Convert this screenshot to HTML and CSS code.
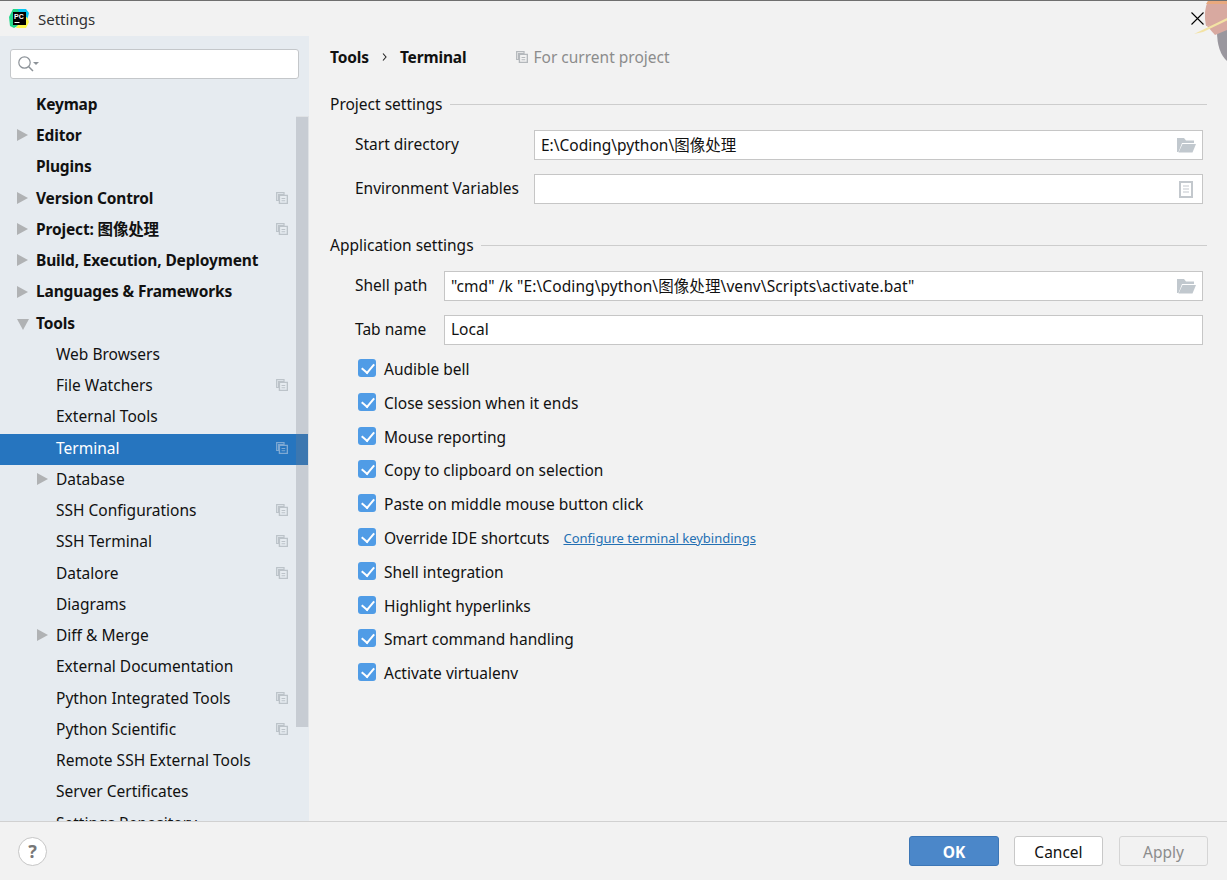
FILE: index.html
```html
<!DOCTYPE html>
<html lang="en">
<head>
<meta charset="utf-8">
<title>Settings</title>
<link rel="stylesheet" href="styles.css">
</head>
<body>
<svg class="defs" width="0" height="0">
  <defs>
    <g id="copy">
      <path d="M.7.7h8v2h-6v6.500h-2z" fill="none" stroke="currentColor" stroke-width="1.300"/>
      <path d="M3.700 3.700h8.600v8.600H3.700z" fill="none" stroke="currentColor" stroke-width="1.500"/>
      <path d="M6 7h4M6 9.500h4" stroke="currentColor" stroke-width="1.200"/>
    </g>
    <g id="folder">
      <path d="M0 1h7l2 2.500h8V6H5L1.500 15H0z" fill="currentColor"/>
      <path d="M5.500 7H19l-3.500 8.500H1.500z" fill="currentColor"/>
    </g>
  </defs>
</svg>
<div class="window">
  <header class="titlebar">
    <svg class="logo" width="21" height="21" viewBox="0 0 21 21">
      <path d="M4 1h8l2 3-2 12-7 4-4-2-1-9z" fill="#21d789"/>
      <path d="M9 1h8l3 4-2 8-6-2z" fill="#07c3f2"/>
      <path d="M18 9l2 5-3 6-10 0 5-8z" fill="#fcf84a"/>
      <rect x="4" y="4" width="13" height="13" fill="#000"/>
      <text x="5" y="11" class="logo-text">PC</text>
      <rect x="5.500" y="14" width="5" height="1" fill="#fff"/>
    </svg>
    <span class="title">Settings</span>
    <svg class="close" width="13" height="13" viewBox="0 0 13 13"><path d="M.5.5l12 12M12.500.5l-12 12" stroke="#000" stroke-width="1.100" fill="none"/></svg>
  </header>
  <svg class="planet" width="37" height="62" viewBox="0 0 37 62">
    <path d="M27 30q0 21 10 30V24z" fill="#9a979e"/>
    <path d="M18 0q-5 10-2 25l21 -2V0z" fill="#d8a9a0"/>
    <path d="M17 25l20-6v10l-12 5z" fill="#d8a9a0"/>
    <path d="M18 0h19v3H16z" fill="#e9a97e"/>
    <path d="M4 33l33-16v2.500L13 31z" fill="#f3e3a4"/>
  </svg>
  <main class="main">
    <nav class="sidebar">
      <div class="search">
        <svg width="22" height="18" viewBox="0 0 22 18"><circle cx="6.500" cy="7.500" r="5.700" fill="none" stroke="#8c9298" stroke-width="1.200"/><path d="M10.500 11.500l4.500 4.500" stroke="#8c9298" stroke-width="1.500"/><path d="M15 7h6l-3 3z" fill="#8c9298"/></svg>
      </div>
      <ul class="tree">
        <li class="row bold"><span class="label">Keymap</span></li>
        <li class="row bold"><i class="arrow"></i><span class="label">Editor</span></li>
        <li class="row bold"><span class="label">Plugins</span></li>
        <li class="row bold"><i class="arrow"></i><span class="label">Version Control</span><svg class="copy" viewBox="0 0 13 13"><use href="#copy"/></svg></li>
        <li class="row bold"><i class="arrow"></i><span class="label">Project: 图像处理</span><svg class="copy" viewBox="0 0 13 13"><use href="#copy"/></svg></li>
        <li class="row bold"><i class="arrow"></i><span class="label">Build, Execution, Deployment</span></li>
        <li class="row bold"><i class="arrow"></i><span class="label">Languages &amp; Frameworks</span></li>
        <li class="row bold"><i class="arrow open"></i><span class="label">Tools</span></li>
        <li class="row sub"><span class="label">Web Browsers</span></li>
        <li class="row sub"><span class="label">File Watchers</span><svg class="copy" viewBox="0 0 13 13"><use href="#copy"/></svg></li>
        <li class="row sub"><span class="label">External Tools</span></li>
        <li class="row sub selected"><span class="label">Terminal</span><svg class="copy" viewBox="0 0 13 13"><use href="#copy"/></svg></li>
        <li class="row sub"><i class="arrow"></i><span class="label">Database</span></li>
        <li class="row sub"><span class="label">SSH Configurations</span><svg class="copy" viewBox="0 0 13 13"><use href="#copy"/></svg></li>
        <li class="row sub"><span class="label">SSH Terminal</span><svg class="copy" viewBox="0 0 13 13"><use href="#copy"/></svg></li>
        <li class="row sub"><span class="label">Datalore</span><svg class="copy" viewBox="0 0 13 13"><use href="#copy"/></svg></li>
        <li class="row sub"><span class="label">Diagrams</span></li>
        <li class="row sub"><i class="arrow"></i><span class="label">Diff &amp; Merge</span></li>
        <li class="row sub"><span class="label">External Documentation</span></li>
        <li class="row sub"><span class="label">Python Integrated Tools</span><svg class="copy" viewBox="0 0 13 13"><use href="#copy"/></svg></li>
        <li class="row sub"><span class="label">Python Scientific</span><svg class="copy" viewBox="0 0 13 13"><use href="#copy"/></svg></li>
        <li class="row sub"><span class="label">Remote SSH External Tools</span></li>
        <li class="row sub"><span class="label">Server Certificates</span></li>
        <li class="row sub"><span class="label">Settings Repository</span></li>
      </ul>
      <div class="scrollbar"></div>
    </nav>
    <section class="content">
      <div class="crumbs">
        <b>Tools</b>
        <svg class="chev" width="5" height="8" viewBox="0 0 5 8"><path d="M1 .5l3 3.500-3 3.500" fill="none" stroke="#222" stroke-width="1.100"/></svg>
        <b>Terminal</b>
        <span class="scope"><svg class="copy" viewBox="0 0 13 13"><use href="#copy"/></svg>For current project</span>
      </div>
      <div class="group first"><span>Project settings</span><hr></div>
      <div class="fields wide">
        <label>Start directory</label>
        <div class="input"><span>E:\Coding\python\图像处理</span><svg class="ficon" width="19" height="17" viewBox="0 0 19 17"><use href="#folder"/></svg></div>
        <label>Environment Variables</label>
        <div class="input"><svg class="ficon doc" width="14" height="17" viewBox="0 0 14 17"><path d="M0 0h14v17H0z" fill="#c3c8cd"/><path d="M2 2h10v13H2z" fill="#fff"/><path d="M4 5h6M4 8h6M4 11h6" stroke="#c3c8cd" stroke-width="1.200"/></svg></div>
      </div>
      <div class="group second"><span>Application settings</span><hr></div>
      <div class="fields narrow">
        <label>Shell path</label>
        <div class="input"><span class="long">"cmd" /k "E:\Coding\python\图像处理\venv\Scripts\activate.bat"</span><svg class="ficon" width="19" height="17" viewBox="0 0 19 17"><use href="#folder"/></svg></div>
        <label>Tab name</label>
        <div class="input"><span>Local</span></div>
      </div>
      <ul class="checks">
        <li><i class="check"></i>Audible bell</li>
        <li><i class="check"></i>Close session when it ends</li>
        <li><i class="check"></i>Mouse reporting</li>
        <li><i class="check"></i>Copy to clipboard on selection</li>
        <li><i class="check"></i>Paste on middle mouse button click</li>
        <li><i class="check"></i>Override IDE shortcuts<a class="link">Configure terminal keybindings</a></li>
        <li><i class="check"></i>Shell integration</li>
        <li><i class="check"></i>Highlight hyperlinks</li>
        <li><i class="check"></i>Smart command handling</li>
        <li><i class="check"></i>Activate virtualenv</li>
      </ul>
    </section>
  </main>
  <footer class="footer">
    <div class="help">?</div>
    <div class="buttons">
      <div class="btn ok">OK</div>
      <div class="btn">Cancel</div>
      <div class="btn disabled">Apply</div>
    </div>
  </footer>
</div>
</body>
</html>
```

FILE: styles.css
```css
* { box-sizing: border-box; }
html, body { margin: 0; padding: 0; }
body {
  font-family: "Noto Sans", "Noto Sans CJK SC", sans-serif;
  font-size: 15.5px;
  color: #111;
  background: #f2f2f2;
}
ul { list-style: none; margin: 0; padding: 0; }
.defs { position: absolute; }
.window {
  position: relative;
  width: 1227px;
  height: 880px;
  display: flex;
  flex-direction: column;
  border-top: 1px solid #6f6f6f;
  overflow: hidden;
}
.titlebar {
  height: 35px;
  flex: none;
  display: flex;
  align-items: center;
  padding: 0 23px 0 9px;
}
.logo { flex: none; margin-right: 8px; }
.logo-text { font: bold 7px "Liberation Sans", sans-serif; fill: #fff; }
.title { flex: 1; color: #333; font-size: 15px; }
.planet { position: absolute; right: 0; top: 0; }
.close { position: relative; z-index: 1; }
.main { flex: 1; display: flex; min-height: 0; }
.sidebar {
  position: relative;
  width: 309px;
  flex: none;
  background: #e6ebf0;
  overflow: hidden;
  padding-top: 13px;
}
.search {
  width: 289px;
  height: 30px;
  margin-left: 10px;
  background: #fff;
  border: 1px solid #c4c7ca;
  border-radius: 3px;
  display: flex;
  align-items: center;
  padding-left: 7px;
}
.tree { margin-top: 11px; }
.row {
  position: relative;
  height: 31.25px;
  display: flex;
  align-items: center;
  padding: 0 21.500px 3.300px 36px;
}
.row.bold { font-weight: 700; letter-spacing: -0.15px; }
.row.sub { padding-left: 56px; }
.label { flex: 1; white-space: nowrap; }
.copy { flex: none; width: 12px; height: 12px; color: #bcc3c9; }
.row .copy { margin-top: 0; }
.arrow {
  position: absolute;
  left: 17px;
  top: 8px;
  width: 0;
  height: 0;
  border-left: 11px solid #b0b2b4;
  border-top: 6px solid transparent;
  border-bottom: 6px solid transparent;
}
.arrow.open {
  left: 17px;
  top: 10px;
  border-top: 11px solid #b0b2b4;
  border-left: 6px solid transparent;
  border-right: 6px solid transparent;
  border-bottom: 0;
}
.row.sub .arrow { left: 37px; }
.selected { background: #2675bf; color: #fff; }
.selected .copy { color: #7ea9d3; }
.scrollbar {
  position: absolute;
  right: 0;
  top: 80px;
  width: 13px;
  height: 611px;
  background: rgba(120, 125, 135, 0.28);
  border: 1px solid #dfe2e5;
  border-width: 1px 1px 0 0;
}
.content { flex: 1; padding: 0 20px 0 21px; min-width: 0; }
.crumbs {
  height: 41px;
  display: flex;
  align-items: center;
  padding-top: 1px;
}
.crumbs b { font-weight: 700; letter-spacing: -0.15px; }
.chev { margin: 0 13px 0 13px; }
.scope {
  margin-left: 50px;
  display: flex;
  align-items: center;
  gap: 5px;
  color: #8c8c8c;
}
.scope .copy { color: #b4b8bc; }
.group { display: flex; align-items: center; gap: 7px; }
.group hr { flex: 1; border: 0; border-top: 1px solid #cdcdcd; margin: 0; }
.group.first { margin-top: 13px; height: 28px; }
.group.second { margin-top: 27px; height: 28px; }
.fields { display: grid; row-gap: 14px; padding-left: 25px; padding-right: 4px; grid-auto-rows: 30px; align-items: center; margin-top: 12px; }
.fields label { margin-top: -2px; }
.fields.wide { grid-template-columns: 179px 1fr; }
.fields.narrow { grid-template-columns: 89px 1fr; }
.input {
  height: 30px;
  background: #fff;
  border: 1px solid #c6c6c6;
  padding: 0 6px 2px 6px;
  display: flex;
  align-items: center;
  white-space: nowrap;
}
.input span { flex: 1; }
.input .long { letter-spacing: 0.09px; }
.ficon { color: #c1c8ce; flex: none; margin-left: auto; margin-top: 2px; }
.ficon.doc { margin-right: 3px; }
.checks { margin-top: 7.3px; padding-left: 28px; }
.checks li { height: 33.78px; display: flex; align-items: center; }
.check {
  position: relative;
  width: 18px;
  height: 18px;
  margin: -2px 8px 0 0;
  flex: none;
  border-radius: 3px;
  background: #509ce6;
}
.check::after {
  content: "";
  position: absolute;
  left: 6px;
  top: 2px;
  width: 6px;
  height: 10px;
  border: solid #fff;
  border-width: 0 2.5px 2.5px 0;
  transform: rotate(40deg);
}
.link { margin-left: 14px; color: #2470b3; font-size: 13px; text-decoration: underline; }
.footer {
  height: 59px;
  flex: none;
  border-top: 1px solid #d1d1d1;
  display: flex;
  align-items: center;
  justify-content: space-between;
  padding: 0 19px 0 18px;
}
.help {
  width: 29px;
  height: 29px;
  border: 1px solid #c6c6c6;
  border-radius: 50%;
  background: #fff;
  color: #777;
  font-weight: 700;
  font-size: 18px;
  line-height: 26px;
  text-align: center;
}
.buttons { display: flex; gap: 15px; }
.btn {
  width: 89px;
  height: 30px;
  border: 1px solid #c8c8c8;
  border-radius: 3px;
  background: #fff;
  display: flex;
  align-items: center;
  justify-content: center;
  padding-top: 1px;
}
.btn.ok { width: 90px; background: #4b87c9; border-color: #3c76b6; color: #fff; font-weight: 700; }
.btn.disabled { margin-left: 1px; background: #f2f2f2; color: #8c8c8c; border-color: #d5d5d5; }
```
